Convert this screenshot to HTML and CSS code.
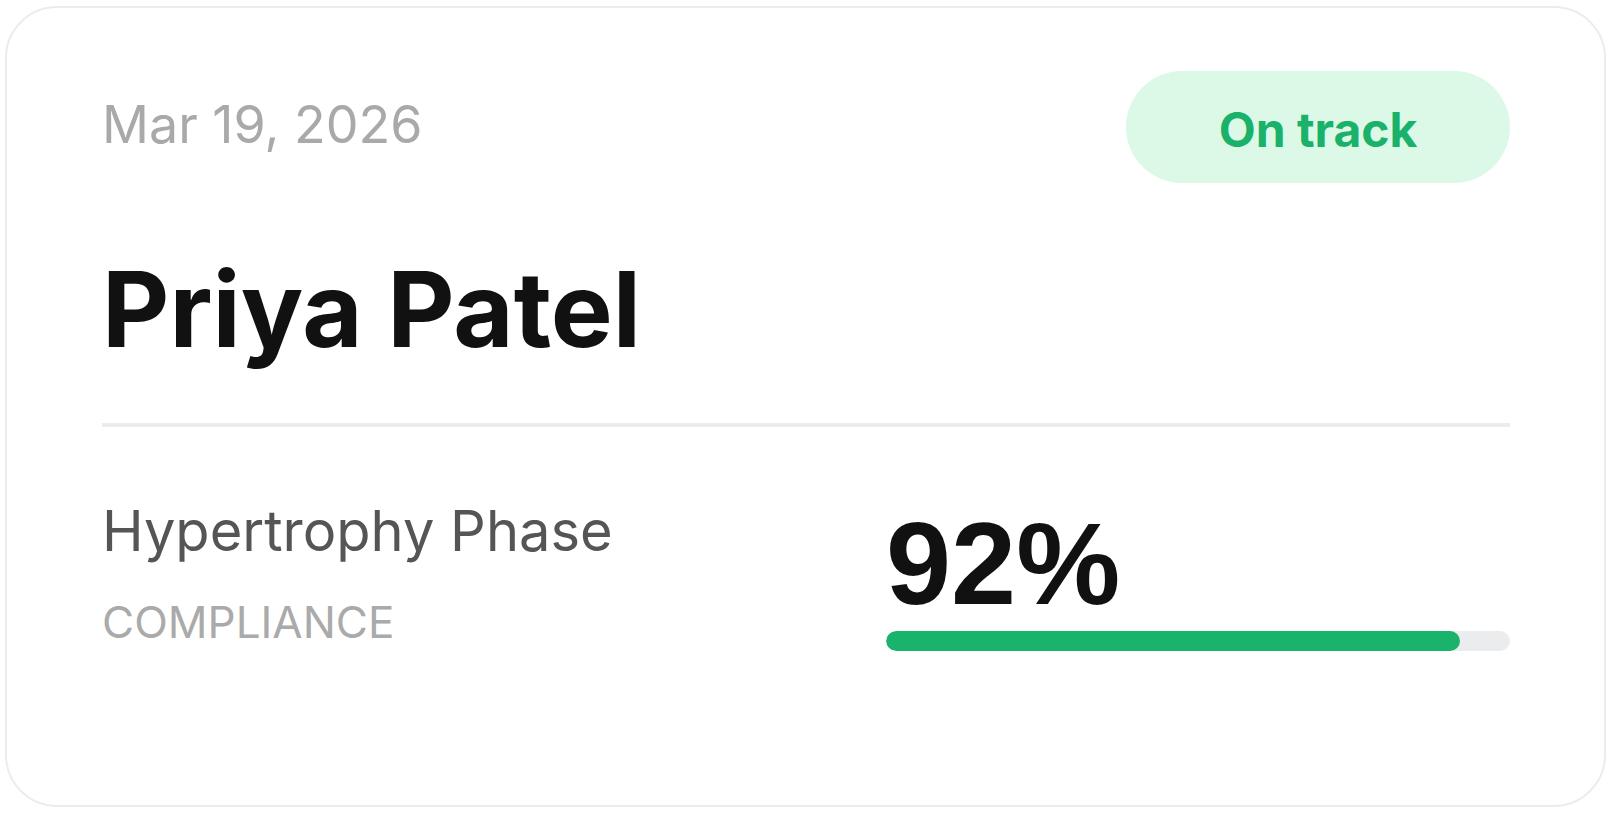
FILE: index.html
```html
<!DOCTYPE html>
<html lang="en">
<head>
<meta charset="utf-8">
<title>Client card</title>
<link rel="stylesheet" href="styles.css">
</head>
<body>
  <article class="card">
    <header class="card-head">
      <span class="date">Mar 19, 2026</span>
      <span class="pill">On track</span>
    </header>
    <h1 class="name">Priya Patel</h1>
    <hr class="divider">
    <section class="stats">
      <div class="phase-col">
        <div class="phase">Hypertrophy Phase</div>
        <div class="label">COMPLIANCE</div>
      </div>
      <div class="metric-col">
        <div class="value">92%</div>
        <div class="track"><div class="fill" style="width: 92%"></div></div>
      </div>
    </section>
  </article>
</body>
</html>
```

FILE: styles.css
```css
* { box-sizing: border-box; }

html, body {
  background: #ffffff;
}

body {
  margin: 0;
  padding: 6px 5px 0 5px;
  font-family: Inter, "Noto Sans", "Liberation Sans", sans-serif;
}

.card {
  width: 1601px;
  height: 801px;
  border: 2px solid #ececec;
  border-radius: 52px;
  padding: 63px 94px 0 95px;
  background: #ffffff;
}

.card-head {
  display: flex;
  justify-content: space-between;
  align-items: center;
  height: 112px;
}

.date {
  font-size: 52px;
  line-height: 1;
  font-weight: 400;
  color: #a9a9a9;
  margin-bottom: 4px;
}

.pill {
  display: flex;
  align-items: center;
  justify-content: center;
  width: 384px;
  height: 112px;
  padding-top: 5px;
  border-radius: 56px;
  background: #dcf9e7;
  color: #1ab26b;
  font-size: 48px;
  line-height: 1;
  font-weight: 700;
}

.name {
  margin: 74px 0 0 0;
  font-size: 104px;
  line-height: 1;
  font-weight: 700;
  color: #111111;
}

.divider {
  margin: 62px 0 0 0;
  border: 0;
  height: 4px;
  background: #ececec;
}

.stats {
  display: grid;
  grid-template-columns: 1fr 624px;
  margin-top: 76px;
}

.phase {
  font-size: 56px;
  line-height: 1;
  color: #555555;
}

.label {
  margin-top: 41px;
  font-size: 44px;
  line-height: 1;
  color: #aaaaaa;
}

.value {
  margin-top: 2px;
  font-family: "Liberation Sans", Arial, sans-serif;
  font-size: 117px;
  line-height: 1;
  font-weight: 700;
  color: #111111;
}

.track {
  margin-top: 9px;
  height: 20px;
  border-radius: 10px;
  background: #ebeced;
  overflow: hidden;
}

.fill {
  height: 100%;
  border-radius: 10px;
  background: #1ab36b;
}
```
